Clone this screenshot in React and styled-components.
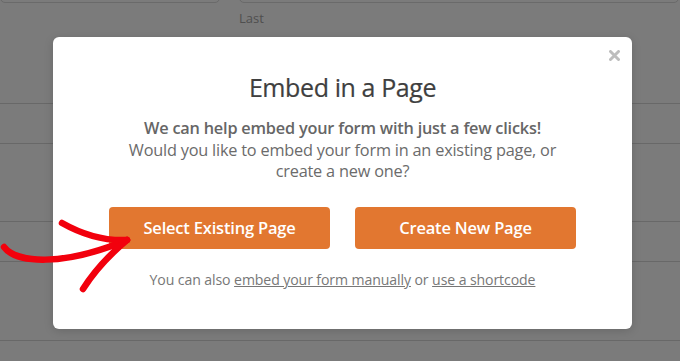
import React from 'react';
import styled, { createGlobalStyle } from 'styled-components';

const GlobalStyle = createGlobalStyle`
  html, body {
    margin: 0;
    padding: 0;
    background: #7b7b7b;
  }
  body {
    font-family: "Open Sans", "Noto Sans", sans-serif;
  }
`;

const Page = styled.div`
  position: relative;
  width: 680px;
  height: 361px;
  overflow: hidden;
  background: #7b7b7b;
`;

const FieldRow = styled.div`
  display: flex;
  gap: 19px;
  margin-top: -30px;
`;

const FieldBox = styled.div`
  width: ${(p) => p.$width}px;
  height: 33px;
  border: 1px solid #6a6a6a;
  border-radius: 0 0 5px 5px;
  box-sizing: border-box;
`;

const FieldLabel = styled.div`
  padding-left: 239px;
  margin-top: 6px;
  font-size: 13px;
  color: #4f4f4f;
  height: 18px;
  line-height: 18px;
`;

const Rows = styled.div`
  display: flex;
  flex-direction: column;
  margin-top: ${(p) => p.$top}px;
`;

const Row = styled.div`
  height: ${(p) => p.$h}px;
  flex-shrink: 0;
  border-bottom: 1px solid #686868;
`;

const Modal = styled.div`
  position: absolute;
  left: 53px;
  top: 37px;
  width: 579px;
  height: 292px;
  background: #fff;
  border-radius: 6px;
  box-sizing: border-box;
  padding: 33px 20px 0;
  display: flex;
  flex-direction: column;
  align-items: center;
  box-shadow: 0 2px 10px rgba(0, 0, 0, 0.15);
`;

const Close = styled.button`
  position: absolute;
  top: 10px;
  right: 10px;
  border: 0;
  background: none;
  padding: 0;
  width: 16px;
  height: 16px;
  display: flex;
  align-items: center;
  justify-content: center;
  cursor: pointer;
`;

const Title = styled.h2`
  margin: 0;
  font-size: 25px;
  font-weight: 400;
  color: #3f3f3f;
  line-height: 34px;
  letter-spacing: -0.4px;
  -webkit-text-stroke: 0.2px #3f3f3f;
`;

const Text = styled.p`
  margin: 14px 0 0;
  font-size: 16.3px;
  line-height: 21.5px;
  color: #6b6b6b;
  text-align: center;
  letter-spacing: -0.2px;

  strong {
    font-weight: 600;
    color: #666;
  }
`;

const Buttons = styled.div`
  display: flex;
  gap: 25px;
  margin-top: 24px;
`;

const Button = styled.button`
  width: 221px;
  height: 42px;
  border: 0;
  border-radius: 4px;
  background: #e27730;
  color: #fff;
  font-family: inherit;
  font-size: 16.5px;
  font-weight: 600;
  letter-spacing: -0.2px;
  cursor: pointer;
`;

const Footer = styled.div`
  margin-top: 21px;
  font-size: 14.1px;
  line-height: 20px;
  color: #777;
  letter-spacing: -0.1px;

  a {
    color: #777;
    text-decoration: underline;
  }
`;

const Arrow = styled.svg`
  position: absolute;
  left: 0;
  top: 210px;
  width: 140px;
  height: 90px;
  overflow: visible;
`;

function App() {
  return (
    <Page>
      <GlobalStyle />
      <FieldRow>
        <FieldBox $width={220} />
        <FieldBox $width={440} />
      </FieldRow>
      <FieldLabel>Last</FieldLabel>
      <Rows $top={36}>
        <Row $h={40} />
        <Row $h={39} />
        <Row $h={77} />
        <Row $h={39} />
        <Row $h={78} />
      </Rows>

      <Modal>
        <Close aria-label="Close">
          <svg width="11" height="11" viewBox="0 0 11 11">
            <path d="M1.5 1.5l8 8M9.5 1.5l-8 8" stroke="#bdbdbd" strokeWidth="3" strokeLinecap="round" />
          </svg>
        </Close>
        <Title>Embed in a Page</Title>
        <Text>
          <strong>We can help embed your form with just a few clicks!</strong>
          <br />
          Would you like to embed your form in an existing page, or
          <br />
          create a new one?
        </Text>
        <Buttons>
          <Button>Select Existing Page</Button>
          <Button>Create New Page</Button>
        </Buttons>
        <Footer>
          You can also <a href="#">embed your form manually</a> or{' '}
          <a href="#">use a shortcode</a>
        </Footer>
      </Modal>

      <Arrow viewBox="0 210 140 90">
        <g fill="none" stroke="#f2000d" strokeWidth="6.5" strokeLinecap="round" strokeLinejoin="round">
          <path d="M4 247 C 16 263, 62 267, 127 240" />
          <path d="M62 223 C 85 236, 105 241, 127 240" />
          <path d="M127 240 C 108 256, 95 270, 83 289" />
        </g>
      </Arrow>
    </Page>
  );
}

export default App;
